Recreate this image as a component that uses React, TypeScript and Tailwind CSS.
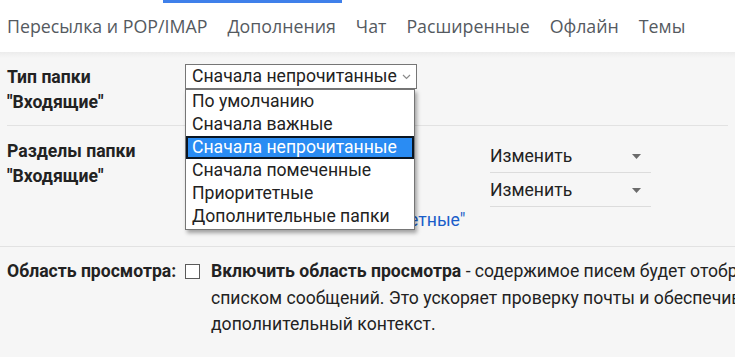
import React from 'react';

const tabs = ['Пересылка и POP/IMAP', 'Дополнения', 'Чат', 'Расширенные', 'Офлайн', 'Темы'];

const options = [
  'По умолчанию',
  'Сначала важные',
  'Сначала непрочитанные',
  'Сначала помеченные',
  'Приоритетные',
  'Дополнительные папки',
];

function Caret() {
  return (
    <svg width="9" height="5" viewBox="0 0 9 5" className="shrink-0">
      <path d="M0 0 L9 0 L4.5 5 Z" fill="#6b6b6b" />
    </svg>
  );
}

function ChangeSelect() {
  return (
    <div className="flex h-[34px] w-[161px] items-center justify-between border-b border-[#dcdcdc] pt-[2px] pr-[10px]">
      <span>Изменить</span>
      <Caret />
    </div>
  );
}

export default function App() {
  return (
    <div className="relative h-[357px] w-[735px] overflow-hidden bg-[#f6f6f6] font-['Roboto','Liberation_Sans',sans-serif] text-[17.6px] text-[#222]">
      {/* Tabs */}
      <div className="h-[52px] bg-white">
        <div className="ml-[163px] h-[3px] w-[179px] bg-[#3f80ea]" />
        <div className="flex h-[49px] items-center gap-[20px] pl-[7px] pb-[2px] font-['Open_Sans',sans-serif] text-[17.8px] text-[#555a5f]">
          {tabs.map((t) => (
            <span key={t} className="whitespace-nowrap">
              {t}
            </span>
          ))}
        </div>
      </div>

      <div className="h-[6px] -mb-[6px] bg-gradient-to-b from-[#ececec] to-[#f6f6f6]" />

      <div className="px-[7px] leading-[25px]">
        {/* Inbox type */}
        <div className="flex pt-[13px] pb-[10px]">
          <div className="w-[178px] shrink-0 font-bold">
            Тип папки
            <br />
            "Входящие"
          </div>
          <div className="relative -mt-[1px]">
            <div className="flex h-[25px] w-[232px] items-center justify-between border border-[#767676] bg-white pl-[6px] pr-[5px]">
              <span className="whitespace-nowrap">Сначала непрочитанные</span>
              <svg width="9" height="6" viewBox="0 0 9 6">
                <path d="M1 1 L4.5 4.5 L8 1" fill="none" stroke="#8a8a8a" strokeWidth="1.2" />
              </svg>
            </div>
            {/* open list */}
            <div className="absolute left-0 top-[25px] z-10 w-[230px] border border-[#767676] bg-white pb-[1px] shadow-[2px_3px_4px_rgba(0,0,0,0.35)]">
              {options.map((o, i) => (
                <div
                  key={o}
                  className={`h-[23px] whitespace-nowrap pl-[6px] leading-[23px] ${
                    i === 2 ? 'bg-[#2a8cf3] text-white ring-2 ring-inset ring-[#0b1622]' : ''
                  }`}
                >
                  {o}
                </div>
              ))}
            </div>
          </div>
        </div>

        <div className="h-px bg-[#e2e2e2]" />

        {/* Inbox sections */}
        <div className="flex pt-[13px] pb-[13px]">
          <div className="w-[178px] shrink-0 font-bold">
            Разделы папки
            <br />
            "Входящие"
          </div>
          <div className="flex flex-col">
            <div className="flex flex-col pl-[305px]">
              <ChangeSelect />
              <ChangeSelect />
            </div>
            <span className="mt-[1px] whitespace-nowrap text-[#1a5dc9]">Добавить раздел "Приоритетные"</span>
          </div>
        </div>

        <div className="-mx-[7px] h-px bg-[#e2e2e2]" />

        {/* Preview pane */}
        <div className="flex pt-[11px] leading-[26.5px]">
          <div className="w-[178px] shrink-0 whitespace-nowrap font-bold">Область просмотра:</div>
          <div className="flex gap-[11px]">
            <div className="mt-[6px] h-[15px] w-[15px] shrink-0 border-[1.5px] border-[#5a5a5a] bg-white" />
            <div className="whitespace-nowrap">
              <b>Включить область просмотра</b> - содержимое писем будет отображаться рядом со
              <br />
              списком сообщений. Это ускоряет проверку почты и обеспечивает
              <br />
              дополнительный контекст.
            </div>
          </div>
        </div>
      </div>
    </div>
  );
}
